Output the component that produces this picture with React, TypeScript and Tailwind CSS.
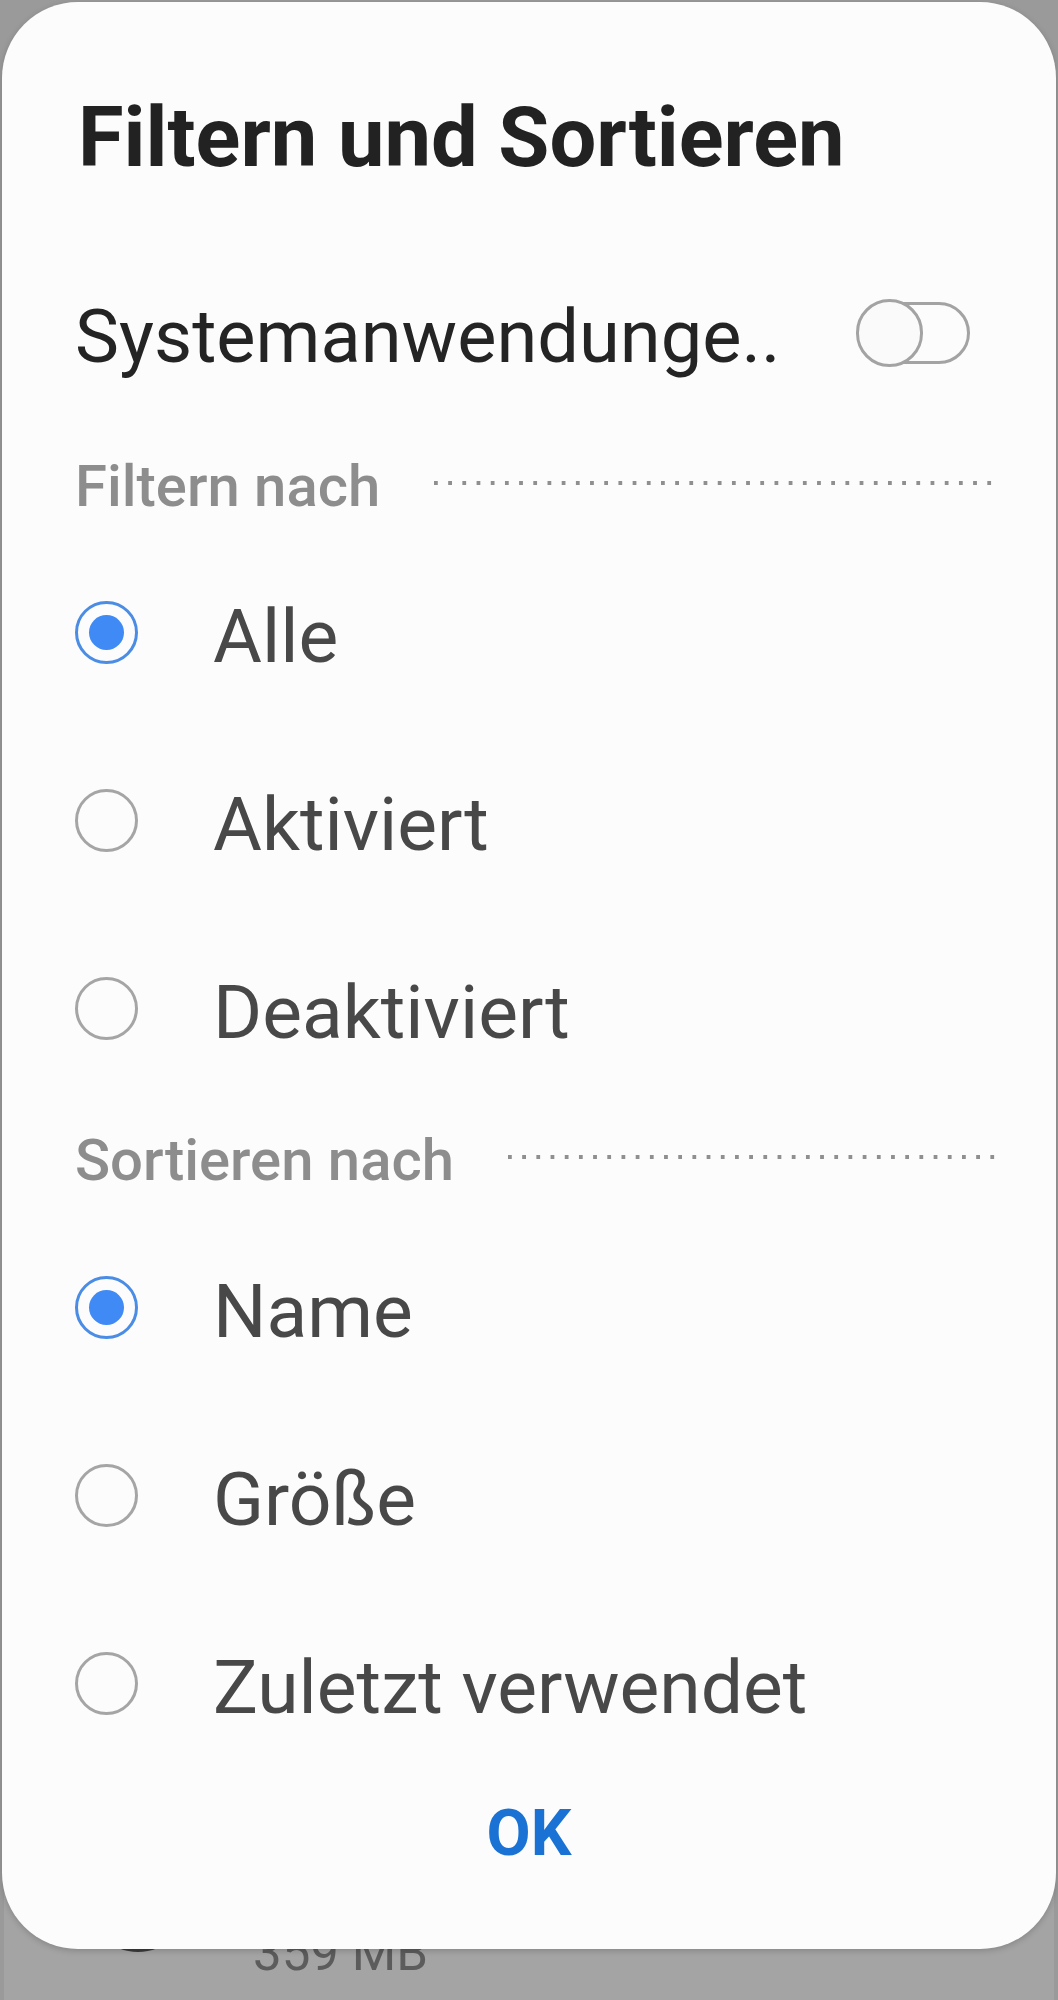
import React from 'react';

type Option = { label: string; checked?: boolean };

const filterOptions: Option[] = [
  { label: 'Alle', checked: true },
  { label: 'Aktiviert' },
  { label: 'Deaktiviert' },
];

const sortOptions: Option[] = [
  { label: 'Name', checked: true },
  { label: 'Größe' },
  { label: 'Zuletzt verwendet' },
];

function Radio({ checked }: { checked?: boolean }) {
  if (checked) {
    return (
      <span className="flex h-[63px] w-[63px] shrink-0 items-center justify-center rounded-full border-[3px] border-[#4b8ce4]">
        <span className="h-[35px] w-[35px] rounded-full bg-[#3f8af5]" />
      </span>
    );
  }
  return <span className="h-[63px] w-[63px] shrink-0 rounded-full border-[3px] border-[#a5a5a5]" />;
}

function OptionRow({ option }: { option: Option }) {
  return (
    <div className="flex h-[188px] items-center">
      <Radio checked={option.checked} />
      <span className="ml-[75px] whitespace-nowrap pt-[8px] text-[75px] leading-none text-[#484848]">
        {option.label}
      </span>
    </div>
  );
}

function SectionHeader({ title, dots }: { title: string; dots: 'filter' | 'sort' }) {
  return (
    <div className="flex items-start">
      <span className="whitespace-nowrap text-[58px] font-medium leading-none text-[#8d8d8d]">{title}</span>
      <div
        className={
          dots === 'filter'
            ? 'ml-auto mr-[4px] mt-[24px] h-[4px] w-[558px] bg-[linear-gradient(to_right,#8f8f8f_4px,transparent_4px)] bg-[length:14.2px_4px] bg-repeat-x'
            : 'ml-auto mr-[1px] mt-[24px] h-[4px] w-[487px] bg-[linear-gradient(to_right,#8f8f8f_4px,transparent_4px)] bg-[length:14.2px_4px] bg-repeat-x'
        }
      />
    </div>
  );
}

function Toggle() {
  return (
    <div className="relative -mt-[1px] mr-[26px] h-[68px] w-[114px] shrink-0">
      <div className="absolute left-[14px] top-[3px] h-[62px] w-[100px] rounded-full border-[3px] border-[#a3a3a3] bg-[#fcfcfc]" />
      <div className="absolute left-0 top-0 h-[68px] w-[67px] rounded-full border-[3px] border-[#a3a3a3] bg-[#fafafa]" />
    </div>
  );
}

export default function App() {
  return (
    <div className="relative h-[2000px] w-[1058px] overflow-hidden bg-[#9a9a9a] font-['Roboto',sans-serif]">
      {/* dimmed app list behind the dialog */}
      <div className="absolute left-[4px] right-[4px] top-[300px] h-[1760px] rounded-[60px] bg-[#a4a4a4]">
        <div className="absolute left-[84px] top-[1552px] h-[100px] w-[100px] rounded-full bg-[#3b3b3b]" />
        <span className="absolute left-[249px] top-[1627px] text-[51px] leading-none text-[#5c5c5c]">359 MB</span>
      </div>

      {/* dialog */}
      <div className="absolute left-[2px] top-[2px] flex h-[1947px] w-[1054px] flex-col rounded-[76px] bg-[#fcfcfc] shadow-[0_2px_6px_rgba(0,0,0,0.18)]">
        <div className="pl-[73px] pr-[60px] pt-[94px]">
          <h1 className="ml-[3px] whitespace-nowrap text-[83px] font-bold leading-none text-[#222222]">Filtern und Sortieren</h1>

          <div className="mt-[121px] flex items-start justify-between">
            <span className="whitespace-nowrap text-[74px] leading-none text-[#242424]">Systemanwendunge..</span>
            <Toggle />
          </div>

          <div className="mt-[83px]">
            <SectionHeader title="Filtern nach" dots="filter" />
          </div>
          <div className="mt-[23px]">
            {filterOptions.map((o) => (
              <OptionRow key={o.label} option={o} />
            ))}
          </div>

          <div className="mt-[29px]">
            <SectionHeader title="Sortieren nach" dots="sort" />
          </div>
          <div className="mt-[24px]">
            {sortOptions.map((o) => (
              <OptionRow key={o.label} option={o} />
            ))}
          </div>
        </div>

        <div className="mt-[25px] text-center">
          <span className="text-[64px] font-bold leading-none text-[#1a73d4]">OK</span>
        </div>
      </div>
    </div>
  );
}
